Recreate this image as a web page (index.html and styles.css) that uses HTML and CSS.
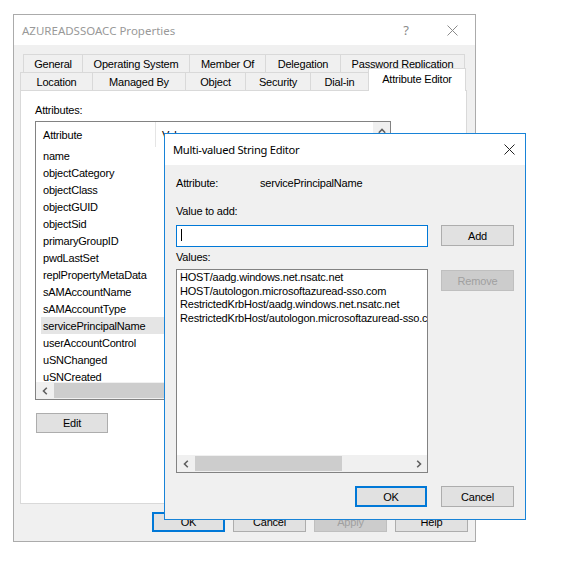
FILE: index.html
```html
<!DOCTYPE html>
<html>
<head>
<meta charset="utf-8">
<link rel="stylesheet" href="styles.css">
</head>
<body>
<div class="win main-win">
  <div class="titlebar">
    <span class="title inactive">AZUREADSSOACC Properties</span>
    <span class="capbtn help">?</span>
    <span class="capbtn close"><svg width="11" height="11" viewBox="0 0 11 11"><path d="M0.5 0.5L10.5 10.5M10.5 0.5L0.5 10.5" stroke="#8a8a8a" stroke-width="1" fill="none"/></svg></span>
  </div>
  <div class="main-body">
    <div class="tabs">
      <div class="tabrow row1">
        <div class="tab w-gen">General</div>
        <div class="tab w-os">Operating System</div>
        <div class="tab w-mo">Member Of</div>
        <div class="tab w-del">Delegation</div>
        <div class="tab w-pw">Password Replication</div>
      </div>
      <div class="tabrow row2">
        <div class="tab w-loc">Location</div>
        <div class="tab w-mb">Managed By</div>
        <div class="tab w-obj">Object</div>
        <div class="tab w-sec">Security</div>
        <div class="tab w-dial">Dial-in</div>
        <div class="tab sel w-ae">Attribute Editor</div>
      </div>
    </div>
    <div class="panel">
      <div class="lbl">Attributes:</div>
      <div class="listview">
        <div class="lv-main">
          <div class="lv-head">
            <div class="h1">Attribute</div>
            <div class="h2">Value</div>
          </div>
          <div class="lv-rows">
            <div class="row"><span class="c1">name</span></div>
            <div class="row"><span class="c1">objectCategory</span></div>
            <div class="row"><span class="c1">objectClass</span></div>
            <div class="row"><span class="c1">objectGUID</span></div>
            <div class="row"><span class="c1">objectSid</span></div>
            <div class="row"><span class="c1">primaryGroupID</span></div>
            <div class="row"><span class="c1">pwdLastSet</span></div>
            <div class="row"><span class="c1">replPropertyMetaData</span></div>
            <div class="row"><span class="c1">sAMAccountName</span></div>
            <div class="row"><span class="c1">sAMAccountType</span></div>
            <div class="row sel"><span class="c1">servicePrincipalName</span></div>
            <div class="row"><span class="c1">userAccountControl</span></div>
            <div class="row"><span class="c1">uSNChanged</span></div>
            <div class="row"><span class="c1">uSNCreated</span></div>
          </div>
          <div class="hscroll">
            <span class="arrow"><svg width="6" height="8" viewBox="0 0 6 8"><polyline points="4.8,0.8 1.5,4 4.8,7.2" fill="none" stroke="#606060" stroke-width="1.6"/></svg></span>
            <span class="thumb thumb-main"></span>
          </div>
        </div>
        <div class="vscroll">
          <span class="arrow"><svg width="8" height="6" viewBox="0 0 8 6"><polyline points="0.8,4.8 4,1.5 7.2,4.8" fill="none" stroke="#606060" stroke-width="1.6"/></svg></span>
        </div>
      </div>
      <button class="btn edit">Edit</button>
    </div>
    <div class="btnrow">
      <button class="btn default">OK</button>
      <button class="btn">Cancel</button>
      <button class="btn disabled">Apply</button>
      <button class="btn">Help</button>
    </div>
  </div>
</div>

<div class="win dlg">
  <div class="titlebar">
    <span class="title dtitle">Multi-valued String Editor</span>
    <span class="capbtn dclose"><svg width="11" height="11" viewBox="0 0 11 11"><path d="M0.5 0.5L10.5 10.5M10.5 0.5L0.5 10.5" stroke="#222" stroke-width="1" fill="none"/></svg></span>
  </div>
  <div class="dlg-body">
    <div class="attr-line"><span class="attr-k">Attribute:</span><span>servicePrincipalName</span></div>
    <div class="lbl2">Value to add:</div>
    <div class="row-input">
      <div class="input"><span class="caret"></span></div>
      <button class="btn side">Add</button>
    </div>
    <div class="lbl3">Values:</div>
    <div class="row-list">
      <div class="vlist">
        <div class="vitems">
          <div class="vitem">HOST/aadg.windows.net.nsatc.net</div>
          <div class="vitem">HOST/autologon.microsoftazuread-sso.com</div>
          <div class="vitem">RestrictedKrbHost/aadg.windows.net.nsatc.net</div>
          <div class="vitem">RestrictedKrbHost/autologon.microsoftazuread-sso.com</div>
        </div>
        <div class="hscroll">
          <span class="arrow"><svg width="6" height="8" viewBox="0 0 6 8"><polyline points="4.8,0.8 1.5,4 4.8,7.2" fill="none" stroke="#606060" stroke-width="1.6"/></svg></span>
          <span class="thumb thumb-dlg"></span>
          <span class="spacer"></span>
          <span class="arrow"><svg width="6" height="8" viewBox="0 0 6 8"><polyline points="1.2,0.8 4.5,4 1.2,7.2" fill="none" stroke="#606060" stroke-width="1.6"/></svg></span>
        </div>
      </div>
      <button class="btn side disabled remove">Remove</button>
    </div>
    <div class="dlg-btns">
      <button class="btn default dok">OK</button>
      <button class="btn side">Cancel</button>
    </div>
  </div>
</div>
</body>
</html>
```
FILE: styles.css
```css
* { box-sizing: border-box; }
html, body { margin: 0; padding: 0; }
body {
  width: 561px;
  height: 570px;
  background: #ffffff;
  position: relative;
  overflow: hidden;
  font-family: "Liberation Sans", Arial, sans-serif;
  font-size: 11px;
  letter-spacing: -0.2px;
  color: #000;
}
.win {
  position: absolute;
  display: flex;
  flex-direction: column;
  background: #f0f0f0;
}
.main-win {
  left: 13px;
  top: 14px;
  width: 463px;
  height: 528px;
  border: 1px solid #ababab;
}
.titlebar {
  flex: none;
  height: 30px;
  background: #ffffff;
  display: flex;
  align-items: center;
  padding-left: 8px;
}
.title {
  flex: 1;
  font-family: "Noto Sans", "Open Sans", sans-serif;
  font-size: 11.5px;
  letter-spacing: 0;
  color: #000;
}
.title.inactive { color: #999999; }
.dtitle { font-size: 11.2px; letter-spacing: -0.3px; }
.capbtn {
  width: 46px;
  height: 30px;
  display: flex;
  align-items: center;
  justify-content: center;
}
.help {
  font-family: "Noto Sans", sans-serif;
  font-size: 13px;
  color: #8a8a8a;
  letter-spacing: 0;
}
.main-body {
  flex: 1;
  padding: 9px 8px 0 6px;
  display: flex;
  flex-direction: column;
}
.tabs { display: flex; flex-direction: column; }
.tabrow { display: flex; height: 18px; align-items: flex-start; }
.row1 { padding-left: 3px; }
.tab {
  height: 18px;
  border: 1px solid #d9d9d9;
  border-bottom: none;
  margin-right: -1px;
  display: flex;
  align-items: center;
  justify-content: center;
  background: #f0f0f0;
  white-space: nowrap;
  padding-top: 1px;
}
.tab.sel {
  background: #ffffff;
  height: 23px;
  margin-top: -4px;
  margin-right: 0;
  position: relative;
  z-index: 1;
  padding-top: 0;
  padding-bottom: 2px;
}
.w-gen { width: 60px; }
.w-os { width: 108px; }
.w-mo { width: 77px; }
.w-del { width: 76px; }
.w-pw { width: 125px; }
.w-loc { width: 73px; }
.w-mb { width: 94px; }
.w-obj { width: 61px; }
.w-sec { width: 66px; }
.w-dial { width: 59px; }
.w-ae { width: 98px; }

.panel {
  height: 414px;
  background: #ffffff;
  border: 1px solid #d9d9d9;
  padding: 13px 0 0 14px;
  display: flex;
  flex-direction: column;
  align-items: flex-start;
}
.lbl { line-height: 13px; height: 13px; margin-bottom: 4px; }
.listview {
  width: 356px;
  height: 279px;
  border: 1px solid #828282;
  display: flex;
  background: #fff;
}
.lv-main {
  flex: 1;
  min-width: 0;
  display: flex;
  flex-direction: column;
  overflow: hidden;
}
.lv-head { flex: none; height: 25px; display: flex; }
.h1 {
  width: 120px;
  padding-left: 7px;
  display: flex;
  align-items: center;
  border-right: 1px solid #e5e5e5;
}
.h2 { padding-left: 6px; display: flex; align-items: center; }
.lv-rows { flex: 1; overflow: hidden; }
.row {
  height: 17px;
  display: flex;
  align-items: center;
  margin-left: 5px;
  white-space: nowrap;
}
.row.sel { background: #e5e5e5; }
.c1 { width: 115px; padding-left: 2px; flex: none; }
.hscroll {
  flex: none;
  height: 17px;
  background: #f0f0f0;
  display: flex;
  align-items: center;
}
.arrow {
  width: 17px;
  height: 17px;
  display: flex;
  align-items: center;
  justify-content: center;
  flex: none;
}
.thumb {
  height: 15px;
  background: #cdcdcd;
  margin-left: 1px;
  flex: none;
}
.thumb-main { width: 260px; }
.thumb-dlg { width: 147px; }
.spacer { flex: 1; }
.vscroll {
  width: 17px;
  flex: none;
  background: #f0f0f0;
  display: flex;
  flex-direction: column;
}

.btn {
  font-family: "Liberation Sans", Arial, sans-serif;
  font-size: 11px;
  letter-spacing: -0.2px;
  background: #e1e1e1;
  border: 1px solid #adadad;
  color: #000;
  padding: 0;
  margin: 0;
  height: 20px;
  width: 73px;
}
.btn.default { border: 2px solid #0078d7; }
.btn.disabled { background: #cccccc; border-color: #bfbfbf; color: #a0a0a0; }
.edit { width: 72px; margin-top: 13px; margin-left: 1px; }
.btnrow {
  margin-top: 8px;
  margin-right: -1px;
  display: flex;
  justify-content: flex-end;
  gap: 8px;
}

.dlg {
  left: 164px;
  top: 133px;
  width: 362px;
  height: 387px;
  border: 1px solid #1883d7;
}
.dlg .titlebar { height: 31px; padding-left: 8px; }
.dclose { width: 30px; margin-right: 1px; }
.dlg-body {
  flex: 1;
  padding: 12px 11px 0 11px;
  display: flex;
  flex-direction: column;
}
.attr-line { line-height: 13px; height: 13px; display: flex; white-space: nowrap; }
.attr-k { width: 84px; flex: none; }
.lbl2 { line-height: 13px; height: 13px; margin-top: 15px; }
.row-input { margin-top: 7px; display: flex; gap: 13px; align-items: flex-start; }
.input {
  width: 252px;
  height: 22px;
  border: 1px solid #0078d7;
  background: #fff;
  padding-left: 4px;
  display: flex;
  align-items: center;
}
.caret { width: 1px; height: 12px; background: #000; margin-top: -2px; }
.btn.side { width: 73px; height: 21px; }
.lbl3 { line-height: 13px; height: 13px; margin-top: 4px; }
.row-list { margin-top: 5px; display: flex; gap: 13px; align-items: flex-start; }
.vlist {
  width: 252px;
  height: 204px;
  border: 1px solid #828282;
  background: #fff;
  display: flex;
  flex-direction: column;
  overflow: hidden;
}
.vitems { flex: 1; padding: 1px 0 0 3px; overflow: hidden; }
.vitem { line-height: 13.5px; white-space: nowrap; }
.remove { margin-top: 1px; }
.dlg-btns {
  margin-top: 13px;
  display: flex;
  justify-content: flex-end;
  gap: 14px;
}
.btn.dok { width: 72px; height: 21px; }
```
